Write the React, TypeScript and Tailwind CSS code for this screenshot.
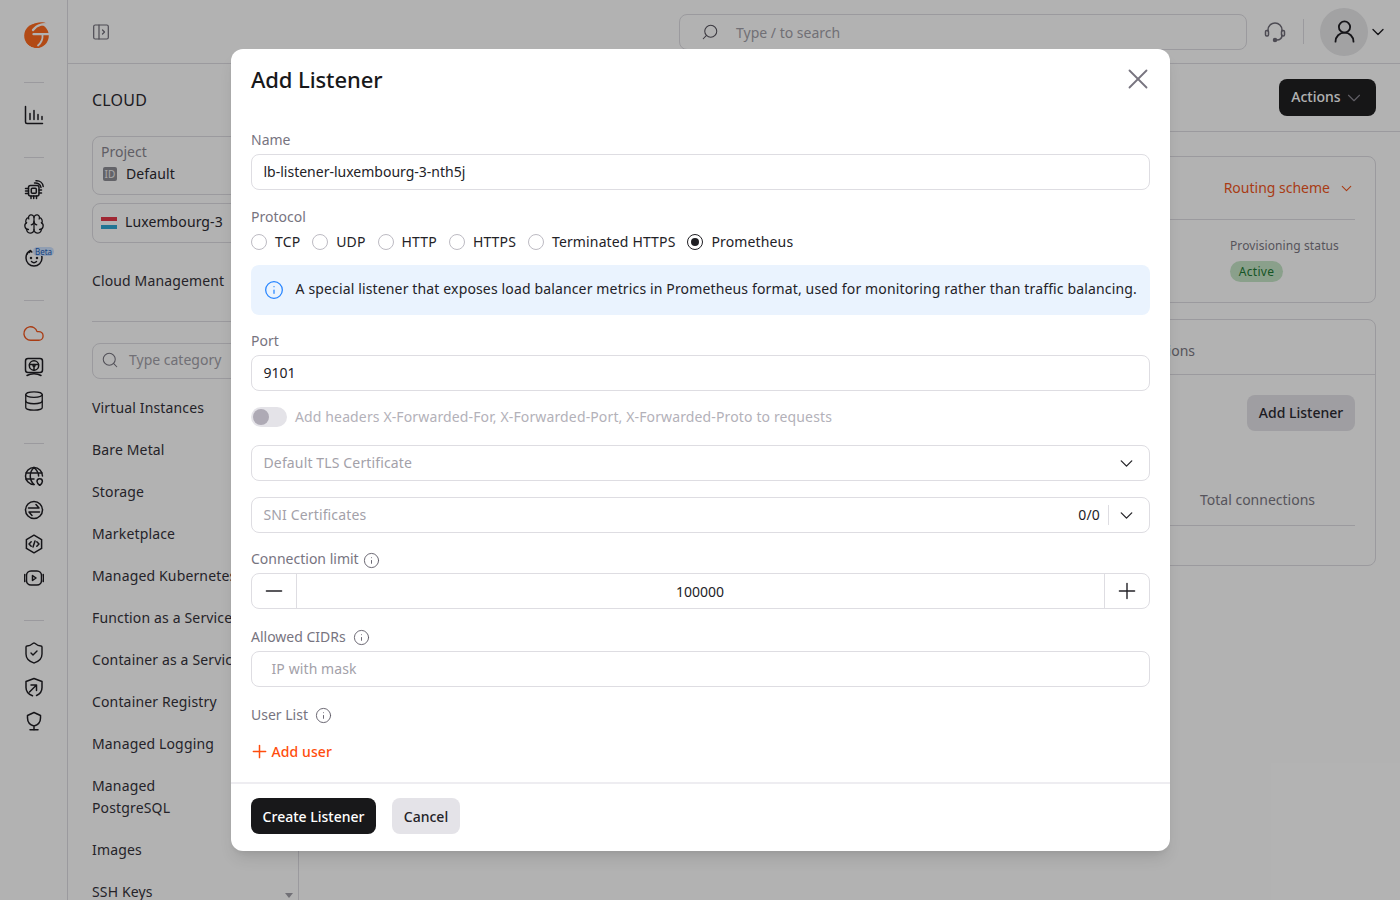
import type { ReactNode } from 'react'
import { Brain, ChevronDown, Cloud, Database, Info, Minus, Plus, Search, ShieldCheck, UserRound, X } from 'lucide-react'

function Rail({ children }: { children: ReactNode }) {
  return (
    <div className="relative flex h-[34px] w-full items-center justify-center text-[#1f1e23]">
      <svg width="20" height="20" viewBox="0 0 20 20" fill="none" stroke="currentColor" strokeWidth="1.5" strokeLinecap="round" strokeLinejoin="round">
        {children}
      </svg>
    </div>
  )
}

function RailLine() {
  return <div className="mb-[15px] mt-[25px] h-px w-[20px] shrink-0 bg-[#dedde2]" />
}

function Logo() {
  return (
    <svg width="30" height="30" viewBox="0 0 30 30" fill="none" strokeLinecap="round">
      <circle cx="15.500" cy="15.700" r="12.300" fill="#ff6a1f" />
      <path d="M11 5c5-3.500 11-3.500 15-1.500-4-.5-8 0-11 3z" fill="#ff6a1f" />
      <path d="M29 5.500c-6-2.500-13-1-17 4.500" stroke="#fff" strokeWidth="2.300" />
      <path d="M12.500 14.200h15" stroke="#fff" strokeWidth="2.300" />
      <path d="M21.500 15c.4 4-1 7.500-4.500 10.500" stroke="#fff" strokeWidth="1.800" />
      <path d="M4 22c3 5.500 10 8 17 6" stroke="#fff" strokeWidth="1" />
    </svg>
  )
}

function Sidebar() {
  return (
    <aside className="flex h-full w-[68px] shrink-0 flex-col items-center border-r border-[#dedde2] pt-[18px]">
      <div className="flex h-[34px] w-full items-center justify-center pl-[5px]"><Logo /></div>
      <div className="h-[5px] shrink-0" />
      <RailLine />
      <Rail><path d="M1.500 1.500v15.500a1.500 1.500 0 0 0 1.500 1.500h15.500M6 14.500V8.500M10 14.500V5.500M14 14.500v-5M18 14.500v-3" /></Rail>
      <RailLine />
      <Rail>
        <rect x="4.500" y="5.500" width="10.500" height="10.500" rx="2" />
        <rect x="7.300" y="8.300" width="5" height="5" rx="1" />
        <path d="M1.500 8.500h3M1.500 11h3M1.500 13.500h3M7 16v2.500M9.700 16v2.500M12.500 16v2.500M15 10h2.500M15 13h2.500M10.500 3c3-.5 6 1.500 6.500 4.500M12 .8c4-.3 6.800 2.200 7.200 5.700" />
      </Rail>
      <div className="flex h-[34px] w-full items-center justify-center text-[#1f1e23]"><Brain size={22} strokeWidth={1.4} /></div>
      <div className="relative w-full">
        <Rail>
          <path d="M6.500 2.500C3.500 4 2 6.800 2 10a8 8 0 0 0 16 0c0-1.500-.4-2.900-1-4" />
          <path d="M5.500 4.500c.6-1.400 2-1.600 2.300-.4" />
          <circle cx="7" cy="10" r=".5" fill="currentColor" />
          <circle cx="13" cy="10" r=".5" fill="currentColor" />
          <path d="M7.500 13.500c1.500 1.400 3.500 1.400 5 0" />
        </Rail>
        <div className="absolute left-[33px] top-[6px] flex h-[9px] w-[21px] items-center justify-center rounded-full bg-[#cfe2ff] text-[8px] leading-none text-[#1d5fb8]">Beta</div>
      </div>
      <RailLine />
      <div className="flex h-[34px] w-full items-center justify-center text-[#f2561d]"><Cloud size={23} strokeWidth={1.4} /></div>
      <Rail>
        <rect x="1.500" y="1.500" width="17" height="14" rx="2.500" />
        <circle cx="10" cy="8.500" r="4.700" />
        <path d="M5.500 7.500h9M10 9.500v3.700M3 18.500c4-2.200 10-2.200 14 0" />
        <circle cx="10" cy="8.500" r="1" />
      </Rail>
      <div className="flex h-[34px] w-full items-center justify-center text-[#1f1e23]"><Database size={22} strokeWidth={1.4} /></div>
      <RailLine />
      <Rail>
        <path d="M18.500 10a8.500 8.500 0 1 0-8.500 8.500" />
        <path d="M10 1.500c-5 4.500-5 12.500 0 17M10 1.500c3.200 2.800 4.600 6 4.600 8.500M2 7h16M2 13h8" />
        <path d="M15.700 19.500c-1.600-1.500-2.700-2.700-2.700-4a2.700 2.700 0 0 1 5.400 0c0 1.300-1.100 2.500-2.700 4z" />
      </Rail>
      <Rail>
        <circle cx="10" cy="10" r="8.500" />
        <path d="M4.500 8H15l-3-3.500M15.500 12H5l3 3.500" />
      </Rail>
      <Rail>
        <path d="M10 1.200l7.600 4.400v8.800L10 18.800l-7.600-4.400V5.600z" />
        <path d="M7.200 7.700L5 10l2.200 2.300M12.800 7.700L15 10l-2.200 2.300M11 7l-2 6" />
      </Rail>
      <Rail>
        <rect x="2.500" y="3" width="15" height="14" rx="4.500" />
        <path d="M.8 6.500c-.5 2-.5 5 0 7M19.200 6.500c.5 2 .5 5 0 7M8.500 7.500v5l3.500-2.500z" />
      </Rail>
      <RailLine />
      <div className="flex h-[34px] w-full items-center justify-center text-[#1f1e23]"><ShieldCheck size={24} strokeWidth={1.4} /></div>
      <Rail>
        <path d="M8.500 18.700C4.500 17.300 2 14.500 2 10.500V4.500L10 1.500l8 3v6c0 3.500-2 6.500-5.500 8" />
        <path d="M5.500 15l7-7M7 8h5.500v5.500" />
      </Rail>
      <Rail>
        <path d="M10 15c-3.500-1-6.500-4-6.500-8V4.500L10 1.500l6.500 3V7c0 4-3 7-6.500 8zM10 15v4M6 18.800h8" />
      </Rail>
    </aside>
  )
}

function NavItem({ children, badge }: { children: ReactNode; badge?: boolean }) {
  return (
    <div className="flex items-center justify-between whitespace-nowrap py-[10px] text-[14px] leading-[22px] tracking-[0.15px] text-[#35333b]">
      <span>{children}</span>
      {badge && <span className="h-[22px] w-[22px] rounded-full bg-[#cfe2ff]" />}
    </div>
  )
}

function NavPanel() {
  return (
    <div className="relative h-full w-[231px] shrink-0 overflow-hidden border-r border-[#dedde2] px-[24px]">
      <div className="pt-[24px] text-[16px] leading-[24px] tracking-[0.2px] text-[#2c2a32]">CLOUD</div>
      <div className="mt-[24px] h-[59px] rounded-lg border border-[#dedde2] px-[8px] pt-[4px]">
        <div className="text-[14px] leading-[22px] text-[#8a8791]">Project</div>
        <div className="flex items-center gap-[9px] pl-[2px] text-[14px] leading-[22px] tracking-[0.1px] text-[#2c2a32]">
          <span className="flex h-[14px] w-[14px] items-center justify-center rounded-[2px] bg-[#8f8e95] text-[10px] leading-none text-[#f2f2f2]">ID</span>
          Default
        </div>
      </div>
      <div className="mt-[8px] flex h-[40px] items-center gap-[8px] rounded-lg border border-[#dedde2] px-[8px] text-[14px] tracking-[0.1px] text-[#2c2a32]">
        <span className="flex h-[12px] w-[16px] flex-col">
          <span className="h-[4px] bg-[#e5384a]" />
          <span className="h-[4px] bg-white" />
          <span className="h-[4px] bg-[#2fa8d5]" />
        </span>
        <span className="pb-[3px]">Luxembourg-3</span>
      </div>
      <div className="mt-[27px] whitespace-nowrap text-[14px] leading-[22px] tracking-[0.13px] text-[#35333b]">Cloud Management</div>
      <div className="mt-[29px] h-px bg-[#dedde2]" />
      <div className="mt-[21px] flex h-[36px] items-center gap-[10px] rounded-lg border border-[#dedde2] pl-[8px] text-[14px] text-[#a3a1a9]">
        <Search size={18} strokeWidth={1.4} className="mb-[2px] text-[#77747f]" />
        <span className="whitespace-nowrap pb-[4px]">Type category</span>
      </div>
      <div className="mt-[8px]">
        <NavItem>Virtual Instances</NavItem>
        <NavItem>Bare Metal</NavItem>
        <NavItem>Storage</NavItem>
        <NavItem>Marketplace</NavItem>
        <NavItem>Managed Kubernetes</NavItem>
        <NavItem>Function as a Service</NavItem>
        <NavItem>Container as a Service</NavItem>
        <NavItem>Container Registry</NavItem>
        <NavItem>Managed Logging</NavItem>
        <NavItem badge>Managed<br />PostgreSQL</NavItem>
        <NavItem>Images</NavItem>
        <NavItem>SSH Keys</NavItem>
      </div>
      <div className="absolute bottom-[2px] right-[5px] h-0 w-0 border-x-[4px] border-t-[5px] border-x-transparent border-t-[#a3a1a9]" />
    </div>
  )
}

function Header() {
  return (
    <header className="flex h-[64px] shrink-0 items-center border-b border-[#dedde2] pl-[25px]">
      <svg width="16" height="16" viewBox="0 0 16 16" fill="none" stroke="#6f6c78" strokeWidth="1.2" strokeLinejoin="round" strokeLinecap="round">
        <rect x=".7" y="1" width="14.600" height="14" rx="1.500" />
        <path d="M6 1v14M9.500 6l2 2-2 2" />
      </svg>
      <div className="ml-[570px] flex h-[36px] w-[568px] items-center rounded-lg border border-[#dedde2] pl-[21px] text-[14px] text-[#a3a1a9]">
        <Search size={18} strokeWidth={1.4} className="-scale-x-100 text-[#55525c]" />
        <span className="ml-[17px] pt-[2px]">Type / to search</span>
      </div>
      <svg className="ml-[17px]" width="22" height="22" viewBox="0 0 22 22" fill="none" stroke="#6f6c78" strokeWidth="1.5" strokeLinecap="round" strokeLinejoin="round">
        <path d="M4 10V9a7 7 0 0 1 14 0v1M18 14c0 3-2 5-5.500 5" />
        <rect x="1.500" y="9.500" width="3" height="5.500" rx="1.200" />
        <rect x="17.500" y="9.500" width="3" height="5.500" rx="1.200" />
        <circle cx="11" cy="19" r="1.500" fill="#6f6c78" />
      </svg>
      <div className="ml-[17px] h-[25px] w-px bg-[#dedde2]" />
      <div className="ml-[16px] flex h-[48px] w-[48px] items-center justify-center rounded-full bg-[#e8e8ea] text-[#1f1e23]">
        <UserRound size={27} strokeWidth={1.6} />
      </div>
      <ChevronDown size={20} strokeWidth={1.6} className="text-[#1f1e23]" />
    </header>
  )
}

function Content() {
  return (
    <div className="flex-1">
      <div className="flex h-[68px] items-center justify-end border-b border-[#dedde2] pr-[24px]">
        <div className="flex h-[37px] w-[97px] items-center justify-center gap-[2px] rounded-lg bg-[#202022] pl-px text-[14px] font-medium text-white">
          <span className="pb-[2px]">Actions</span>
          <ChevronDown size={22} strokeWidth={1.2} className="text-[#8a8791]" />
        </div>
      </div>
      <div className="px-[24px] pt-[24px]">
        <div className="h-[147px] rounded-lg border border-[#dedde2] px-[20px]">
          <div className="flex h-[63px] items-center justify-end gap-[8px] border-b border-[#dedde2] text-[14px] text-[#f2561d]">
            <span className="pb-[2px]">Routing scheme</span>
            <ChevronDown size={17} strokeWidth={1.5} />
          </div>
          <div className="flex justify-end pt-[17px]">
            <div className="w-[125px] text-[12px] leading-[18px] tracking-[0.1px] text-[#7c7984]">
              <div className="whitespace-nowrap">Provisioning status</div>
              <div className="mt-[6px] flex h-[21px] w-[53px] items-center justify-center rounded-full bg-[#c6e6c8] text-[12px] tracking-[0.3px] text-[#1f7a35]">Active</div>
            </div>
          </div>
        </div>
        <div className="mt-[16px] h-[247px] rounded-lg border border-[#dedde2]">
          <div className="flex h-[55px] items-center justify-end border-b border-[#dedde2] pr-[180px] pt-[6px] text-[14px] text-[#7c7984]">Listeners and connections</div>
          <div className="px-[20px]">
            <div className="flex justify-end pt-[20px]">
              <div className="flex h-[36px] w-[108px] items-center justify-center rounded-lg bg-[#e4e3e8] pb-[2px] text-[14px] font-medium text-[#2c2a32]">Add Listener</div>
            </div>
            <div className="mt-[59px] flex justify-end border-b border-[#dedde2] pb-[15px] text-[14px] leading-[20px] text-[#7c7984]">
              <div className="w-[155px]">Total connections</div>
            </div>
          </div>
        </div>
      </div>
    </div>
  )
}

function Label({ children, className = '' }: { children: ReactNode; className?: string }) {
  return (
    <div className={`flex h-[20px] items-center text-[14px] leading-[20px] text-[#77747f] ${className}`}>
      {children}
    </div>
  )
}

function Hint({ className }: { className: string }) {
  return <Info size={17} strokeWidth={1.3} className={`text-[#5f5c68] ${className}`} />
}

function Radio({ label, checked }: { label: string; checked?: boolean }) {
  return (
    <div className="flex items-center gap-[8px]">
      <span className={`flex h-[16px] w-[16px] items-center justify-center rounded-full border ${checked ? 'border-[#1f1e23]' : 'border-[#bdbbc3]'}`}>
        {checked && <span className="h-[8px] w-[8px] rounded-full bg-[#1f1e23]" />}
      </span>
      <span className="pb-[2px]">{label}</span>
    </div>
  )
}

function Field({ children, className = '' }: { children: ReactNode; className?: string }) {
  return (
    <div className={`flex h-[36px] items-center rounded-lg border border-[#dedde2] text-[14px] ${className}`}>
      {children}
    </div>
  )
}

function AddListenerModal() {
  return (
    <div className="absolute inset-0 flex justify-center bg-black/30 pl-px pt-[49px]">
      <div className="h-[802px] w-[939.5px] rounded-xl bg-white text-[#232227] shadow-lg">
        <div className="flex h-[62px] items-center justify-between pb-[2px] pl-[20.25px] pr-[15.5px]">
          <div className="text-[22px] font-medium leading-[30px] tracking-[-0.1px] text-[#18181a]">Add Listener</div>
          <X size={34} strokeWidth={1.3} className="text-[#77747f]" />
        </div>
        <div className="px-[20.25px] pt-[19px]">
          <Label className="mb-[3.5px]">Name</Label>
          <Field className="pl-[11.5px]"><span className="pb-[1px]">lb-listener-luxembourg-3-nth5j</span></Field>

          <Label className="mt-[17.5px]">Protocol</Label>
          <div className="mt-[5px] flex h-[20px] items-center gap-[12px] text-[14px] tracking-[0.14px]">
            <Radio label="TCP" />
            <Radio label="UDP" />
            <Radio label="HTTP" />
            <Radio label="HTTPS" />
            <Radio label="Terminated HTTPS" />
            <Radio label="Prometheus" checked />
          </div>
          <div className="mt-[13px] flex h-[50px] items-center gap-[11.5px] rounded-lg bg-[#eaf3fe] pl-[13px] text-[14px] tracking-[0.145px] text-[#232227]">
            <Info size={20} strokeWidth={1.5} className="text-[#2684ff]" />
            <span className="pb-[4px]">A special listener that exposes load balancer metrics in Prometheus format, used for monitoring rather than traffic balancing.</span>
          </div>

          <Label className="mb-[4px] mt-[16px]">Port</Label>
          <Field className="pl-[11.5px]"><span className="pb-[2px]">9101</span></Field>

          <div className="mt-[16px] flex h-[20px] items-center gap-[8px] text-[14px] tracking-[0.13px] text-[#b3b1b9]">
            <div className="flex h-[20px] w-[36px] items-center rounded-full bg-[#e4e3e8] pl-[2px]">
              <div className="h-[16px] w-[16px] rounded-full bg-[#aeaab5]" />
            </div>
            <span className="pb-[2px]">Add headers X-Forwarded-For, X-Forwarded-Port, X-Forwarded-Proto to requests</span>
          </div>

          <Field className="mt-[18px] justify-between pl-[11.5px] pr-[12px] tracking-[0.14px] text-[#a3a1a9]">
            <span className="pb-[2px]">Default TLS Certificate</span>
            <ChevronDown size={21} strokeWidth={1.5} className="text-[#232227]" />
          </Field>
          <Field className="mt-[16px] pl-[11.5px] pr-[12px] tracking-[0.14px] text-[#a3a1a9]">
            <span className="flex-1 pb-[2px]">SNI Certificates</span>
            <span className="pb-[2px] text-[#232227]">0/0</span>
            <span className="ml-[8px] h-[20px] w-px bg-[#dedde2]" />
            <ChevronDown size={21} strokeWidth={1.5} className="ml-[7px] text-[#232227]" />
          </Field>

          <Label className="mb-[4px] mt-[16px]">Connection limit<Hint className="ml-[4px] mt-[3px]" /></Label>
          <Field>
            <div className="flex h-full w-[45px] items-center justify-center border-r border-[#dedde2]"><Minus size={26} strokeWidth={1.3} /></div>
            <div className="flex-1 pr-[1px] text-center">100000</div>
            <div className="flex h-full w-[45px] items-center justify-center border-l border-[#dedde2]"><Plus size={26} strokeWidth={1.3} /></div>
          </Field>

          <Label className="mb-[4px] mt-[18px]">Allowed CIDRs<Hint className="ml-[7px]" /></Label>
          <Field className="pl-[19.5px] tracking-[0.1px] text-[#a3a1a9]"><span className="pb-[2px]">IP with mask</span></Field>

          <Label className="mt-[18px]">User List<Hint className="ml-[7px]" /></Label>
          <div className="mt-[16px] flex h-[20px] items-center gap-[1.5px] text-[14px] font-medium tracking-[0.1px] text-[#ff4d0d]">
            <Plus size={21} strokeWidth={1.7} className="ml-[-2px]" />
            Add user
          </div>
        </div>
        <div className="mt-[21px] flex gap-[16px] border-t-2 border-[#eeedf1] px-[20.25px] pt-[14px] text-[14px] font-medium">
          <div className="flex h-[36px] w-[125px] items-center justify-center rounded-lg bg-[#18181a] text-white">Create Listener</div>
          <div className="flex h-[36px] w-[68px] items-center justify-center rounded-lg bg-[#e4e3e8] text-[#232227]">Cancel</div>
        </div>
      </div>
    </div>
  )
}

export default function App() {
  return (
    <div className="relative flex h-screen w-full overflow-hidden bg-white font-['Noto_Sans',sans-serif]">
      <Sidebar />
      <div className="flex min-w-0 flex-1 flex-col">
        <Header />
        <div className="flex min-h-0 flex-1">
          <NavPanel />
          <Content />
        </div>
      </div>
      <AddListenerModal />
    </div>
  )
}
